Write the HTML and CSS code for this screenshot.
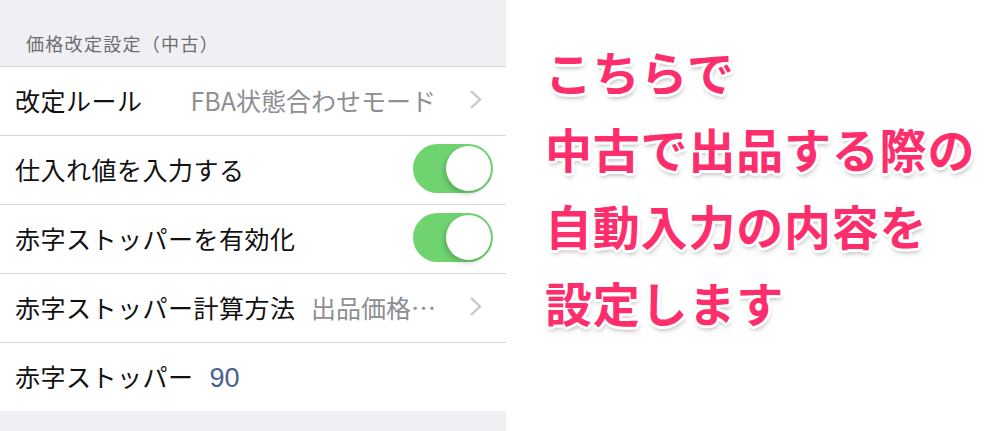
FILE: index.html
```html
<!DOCTYPE html>
<html lang="ja">
<head>
  <meta charset="UTF-8" />
  <title>価格改定設定</title>
  <link rel="stylesheet" href="styles.css">
</head>
<body>
  <section class="settings">
    <div class="section-head">価格改定設定（中古）</div>
    <div class="row">
      <span class="label">改定ルール</span>
      <span class="value">FBA状態合わせモード</span>
      <svg class="chevron" width="13" height="21" viewBox="0 0 13 21"><path d="M2 2l9 8.5-9 8.5" fill="none" stroke="#c7c7cc" stroke-width="2.4"/></svg>
    </div>
    <div class="row">
      <span class="label">仕入れ値を入力する</span>
      <span class="switch"><span class="knob"></span></span>
    </div>
    <div class="row">
      <span class="label">赤字ストッパーを有効化</span>
      <span class="switch"><span class="knob"></span></span>
    </div>
    <div class="row">
      <span class="label">赤字ストッパー計算方法</span>
      <span class="value">出品価格…</span>
      <svg class="chevron" width="13" height="21" viewBox="0 0 13 21"><path d="M2 2l9 8.5-9 8.5" fill="none" stroke="#c7c7cc" stroke-width="2.4"/></svg>
    </div>
    <div class="row">
      <span class="label">赤字ストッパー<span class="num">90</span></span>
    </div>
  </section>

  <section class="note">
    <p>こちらで</p>
    <p>中古で出品する際の</p>
    <p>自動入力の内容を</p>
    <p>設定します</p>
  </section>
</body>
</html>
```

FILE: styles.css
```css
body { margin: 0; background: #fff; font-family: "Noto Sans CJK JP", "Noto Sans", sans-serif; display: flex; height: 431px; overflow: hidden; }

.settings { width: 506px; background: #efeff4; flex-shrink: 0; }
.section-head { height: 66px; box-sizing: border-box; padding: 30px 0 0 26px; font-size: 18px; line-height: 26px; letter-spacing: 1.3px; color: #6d6d72; }
.row { height: 69px; box-sizing: border-box; background: #fff; border-top: 1px solid #d8d8dc; display: flex; align-items: center; padding: 0 14px 3px 15px; }
.label { font-size: 25px; letter-spacing: 0.5px; color: #111; flex: 1; white-space: nowrap; }
.value { font-size: 25px; letter-spacing: 0; color: #8e8e93; white-space: nowrap; margin-right: 33px; }
.num { color: #4a6190; font-family: "Liberation Sans", sans-serif; font-size: 27px; letter-spacing: 0; margin-left: 16px; }
.chevron { margin-right: 10px; }

.switch { width: 80px; height: 49px; border-radius: 25px; background: #6fd46f; position: relative; margin-right: -1px; }
.knob { position: absolute; right: 2px; top: 2px; width: 45px; height: 45px; border-radius: 50%; background: #fff; box-shadow: -2px 3px 5px rgba(0,0,0,0.18); }

.note { padding: 32px 0 0 39px; }
.note p { margin: 0; font-size: 47px; line-height: 77px; font-weight: 700; color: #fe2d6c; letter-spacing: 0.8px; white-space: nowrap;
  text-shadow: 3px 0 0 #fff, -3px 0 0 #fff, 0 3px 0 #fff, 0 -3px 0 #fff, 2px 2px 0 #fff, -2px 2px 0 #fff, 2px -2px 0 #fff, -2px -2px 0 #fff, 1px 4px 5px rgba(0,0,0,0.3); }
```
